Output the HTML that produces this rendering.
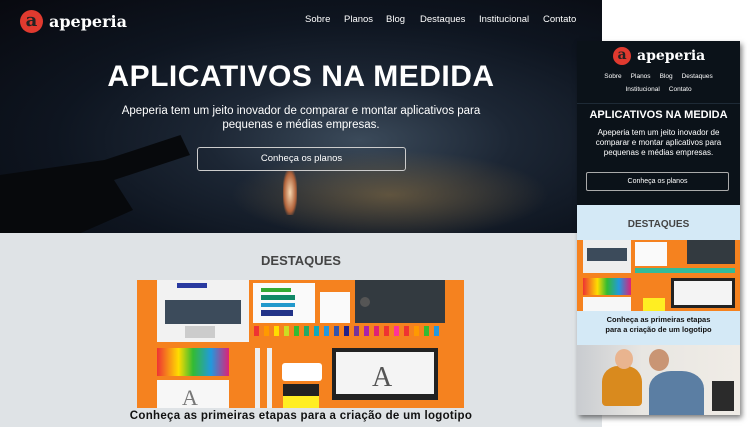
<!DOCTYPE html>
<html><head><meta charset="utf-8"><style>
*{margin:0;padding:0;box-sizing:border-box}
body{width:752px;height:427px;overflow:hidden;background:#fff;font-family:"Liberation Sans","DejaVu Sans",sans-serif;position:relative}
.hero{position:absolute;left:0;top:0;width:602px;height:233px;background:radial-gradient(ellipse at 360px 140px,#3b4a5a 0%,#1c2634 30%,#0e1520 60%,#08090f 100%)}
.glow{position:absolute;left:230px;top:150px;width:320px;height:90px;background:radial-gradient(ellipse,rgba(150,120,70,.55),rgba(90,70,40,0) 70%)}
.rock{position:absolute;left:283px;top:170px;width:14px;height:45px;background:radial-gradient(ellipse,#f6d7b0,#b0623a 60%,rgba(0,0,0,0) 80%)}
.sil{position:absolute;left:0;top:135px;width:190px;height:100px;background:#07090c;clip-path:polygon(0 40%,55% 25%,95% 0,100% 20%,60% 45%,70% 75%,40% 100%,0 100%)}
.logo{position:absolute;display:flex;align-items:center;color:#fff;font-family:"DejaVu Serif","Liberation Serif",serif;font-weight:bold}
.logo i{display:inline-block;border-radius:50%;background:#e03a2f;color:#222;font-style:normal;text-align:center;font-family:"DejaVu Serif",serif;font-weight:bold}
.nav{position:absolute;top:14px;color:#fff;font-size:9.5px}
.nav span{position:absolute;white-space:nowrap}
.gray{position:absolute;left:0;top:233px;width:602px;height:194px;background:#dfe3e6}
.h1{position:absolute;left:0;width:602px;top:60px;text-align:center;color:#fff;font-size:30px;font-weight:bold;letter-spacing:.5px}
.sub{position:absolute;left:0;width:602px;top:104px;text-align:center;color:#fff;font-size:11.5px;line-height:14px}
.btn{position:absolute;left:197px;top:147px;width:209px;height:24px;border:1px solid #ccc;border-radius:3px;color:#fff;font-size:9.5px;text-align:center;line-height:22px}
.dest{position:absolute;left:0;width:602px;top:253px;text-align:center;font-weight:bold;color:#444;font-size:13px}
.cap{position:absolute;left:0;width:602px;top:410px;text-align:center;font-weight:bold;color:#111;font-size:11.5px;letter-spacing:.3px}
.phone{position:absolute;left:577px;top:41px;width:163px;height:374px;background:#d4e9f6;box-shadow:2px 3px 5px rgba(0,0,0,.5);overflow:hidden}
.ph{position:absolute;left:0;top:0;width:163px;height:164px;background:#0b1219}
</style></head><body>
<div class="hero"><div class="glow"></div><div class="rock"></div><div class="sil"></div></div>
<div class="logo" style="left:20px;top:10px;font-size:16px"><i style="width:23px;height:23px;line-height:21px;font-size:18px;margin-right:6px">a</i>apeperia</div>
<div class="nav"><span style="left:305px">Sobre</span><span style="left:344px">Planos</span><span style="left:386px">Blog</span><span style="left:420px">Destaques</span><span style="left:479px">Institucional</span><span style="left:543px">Contato</span></div>
<div class="h1">APLICATIVOS NA MEDIDA</div>
<div class="sub">Apeperia tem um jeito inovador de comparar e montar aplicativos para<br>pequenas e médias empresas.</div>
<div class="btn">Conheça os planos</div>
<div class="gray"></div>
<div class="dest">DESTAQUES</div>
<svg style="position:absolute;left:137px;top:280px" width="327" height="128" viewBox="0 0 327 128">
<defs><linearGradient id="pc"><stop offset="0" stop-color="#e33"/><stop offset=".3" stop-color="#fd0"/><stop offset=".5" stop-color="#3b3"/><stop offset=".75" stop-color="#29d"/><stop offset="1" stop-color="#d27"/></linearGradient></defs>
<rect width="327" height="128" fill="#f5821f"/>
<rect x="20" y="0" width="92" height="62" fill="#f2f2f2"/><rect x="28" y="20" width="76" height="24" fill="#3c4b5b"/><rect x="48" y="46" width="30" height="12" fill="#ccc"/><rect x="40" y="3" width="30" height="5" fill="#2a3aa0"/>
<rect x="116" y="3" width="62" height="40" fill="#fafafa"/><rect x="124" y="8" width="30" height="4" fill="#3a3"/><rect x="124" y="15" width="34" height="5" fill="#186"/><rect x="124" y="23" width="34" height="4" fill="#29c"/><rect x="124" y="30" width="32" height="6" fill="#238"/>
<rect x="183" y="12" width="30" height="31" fill="#fafafa"/>
<rect x="218" y="0" width="90" height="43" fill="#333a40"/><circle cx="228" cy="22" r="5" fill="#555"/>
<g fill="#e33">
<rect x="117" y="46" width="5" height="10"/><rect x="127" y="46" width="5" height="10" fill="#f90"/><rect x="137" y="46" width="5" height="10" fill="#fd0"/><rect x="147" y="46" width="5" height="10" fill="#cd2"/><rect x="157" y="46" width="5" height="10" fill="#3b3"/><rect x="167" y="46" width="5" height="10" fill="#2a6"/><rect x="177" y="46" width="5" height="10" fill="#1ab"/><rect x="187" y="46" width="5" height="10" fill="#29d"/><rect x="197" y="46" width="5" height="10" fill="#35a"/><rect x="207" y="46" width="5" height="10" fill="#228"/><rect x="217" y="46" width="5" height="10" fill="#739"/><rect x="227" y="46" width="5" height="10" fill="#a2a"/><rect x="237" y="46" width="5" height="10" fill="#d27"/><rect x="247" y="46" width="5" height="10"/><rect x="257" y="46" width="5" height="10" fill="#f39"/><rect x="267" y="46" width="5" height="10" fill="#e33"/><rect x="277" y="46" width="5" height="10" fill="#f90"/><rect x="287" y="46" width="5" height="10" fill="#3b3"/><rect x="297" y="46" width="5" height="10" fill="#29d"/>
</g>
<rect x="20" y="68" width="72" height="28" fill="url(#pc)"/>
<rect x="20" y="100" width="72" height="28" fill="#f7f7f7"/><text x="45" y="125" font-size="22" fill="#777" font-family="Liberation Serif">A</text>
<rect x="118" y="68" width="5" height="60" fill="#eee"/><rect x="130" y="68" width="5" height="60" fill="#eee"/>
<rect x="145" y="83" width="40" height="18" rx="3" fill="#fff"/>
<rect x="146" y="104" width="36" height="24" fill="#222"/><rect x="146" y="116" width="36" height="12" fill="#fe2"/>
<rect x="195" y="68" width="106" height="52" fill="#222"/><rect x="199" y="72" width="98" height="42" fill="#f4f4f4"/><text x="235" y="106" font-size="28" fill="#555" font-family="Liberation Serif">A</text>
</svg>
<div class="cap">Conheça as primeiras etapas para a criação de um logotipo</div>
<div class="phone">
<div class="ph"></div>
<div class="logo" style="left:36px;top:6px;font-size:14px"><i style="width:18px;height:18px;line-height:16px;font-size:14px;margin-right:6px">a</i>apeperia</div>
<div style="position:absolute;left:0;width:163px;top:29px;text-align:center;color:#fff;font-size:6.5px;line-height:13px">Sobre &nbsp;&nbsp;&nbsp; Planos &nbsp;&nbsp;&nbsp; Blog &nbsp;&nbsp;&nbsp; Destaques<br>Institucional &nbsp;&nbsp;&nbsp; Contato</div>
<div style="position:absolute;left:0;top:62px;width:163px;border-top:1px solid #1e2a36"></div>
<div style="position:absolute;left:0;width:163px;top:68px;text-align:center;color:#fff;font-size:11px;font-weight:bold">APLICATIVOS NA MEDIDA</div>
<div style="position:absolute;left:0;width:163px;top:87px;text-align:center;color:#fff;font-size:8px;line-height:10px">Apeperia tem um jeito inovador de<br>comparar e montar aplicativos para<br>pequenas e médias empresas.</div>
<div style="position:absolute;left:9px;top:131px;width:143px;height:19px;border:1px solid #aaa;border-radius:2px;color:#fff;font-size:7px;text-align:center;line-height:17px">Conheça os planos</div>
<div style="position:absolute;left:0;width:163px;top:178px;text-align:center;font-weight:bold;color:#444;font-size:10px">DESTAQUES</div>
<svg style="position:absolute;left:0;top:199px" width="163" height="71" viewBox="0 0 163 71"><rect width="163" height="71" fill="#f5821f"/><rect x="6" y="0" width="48" height="33" fill="#eee"/><rect x="10" y="8" width="40" height="13" fill="#3c4b5b"/><rect x="58" y="2" width="32" height="24" fill="#fafafa"/><rect x="110" y="0" width="48" height="24" fill="#333a40"/><rect x="58" y="28" width="100" height="5" fill="#3b9"/><rect x="6" y="38" width="48" height="17" fill="url(#pc)"/><rect x="6" y="57" width="48" height="14" fill="#f7f7f7"/><rect x="94" y="38" width="64" height="30" fill="#222"/><rect x="97" y="41" width="58" height="24" fill="#f4f4f4"/><rect x="66" y="58" width="22" height="13" fill="#fe2"/></svg>
<div style="position:absolute;left:0;width:163px;top:274px;text-align:center;font-weight:bold;color:#111;font-size:7.5px;line-height:10px">Conheça as primeiras etapas<br>para a criação de um logotipo</div>
<div style="position:absolute;left:0;top:304px;width:163px;height:70px;background:linear-gradient(90deg,#c9ccd0,#e8e6e2 40%,#f0ece6)"></div>
<div style="position:absolute;left:25px;top:325px;width:40px;height:40px;background:#d98a1e;border-radius:40% 40% 10% 10%"></div>
<div style="position:absolute;left:72px;top:330px;width:55px;height:44px;background:#5b7ea3;border-radius:40% 40% 0 0"></div>
<div style="position:absolute;left:38px;top:308px;width:18px;height:20px;background:#e9b48f;border-radius:50%"></div>
<div style="position:absolute;left:72px;top:308px;width:20px;height:22px;background:#c99574;border-radius:50%"></div>
<div style="position:absolute;left:135px;top:340px;width:22px;height:30px;background:#2b2b2b"></div>
</div>
</body></html>
